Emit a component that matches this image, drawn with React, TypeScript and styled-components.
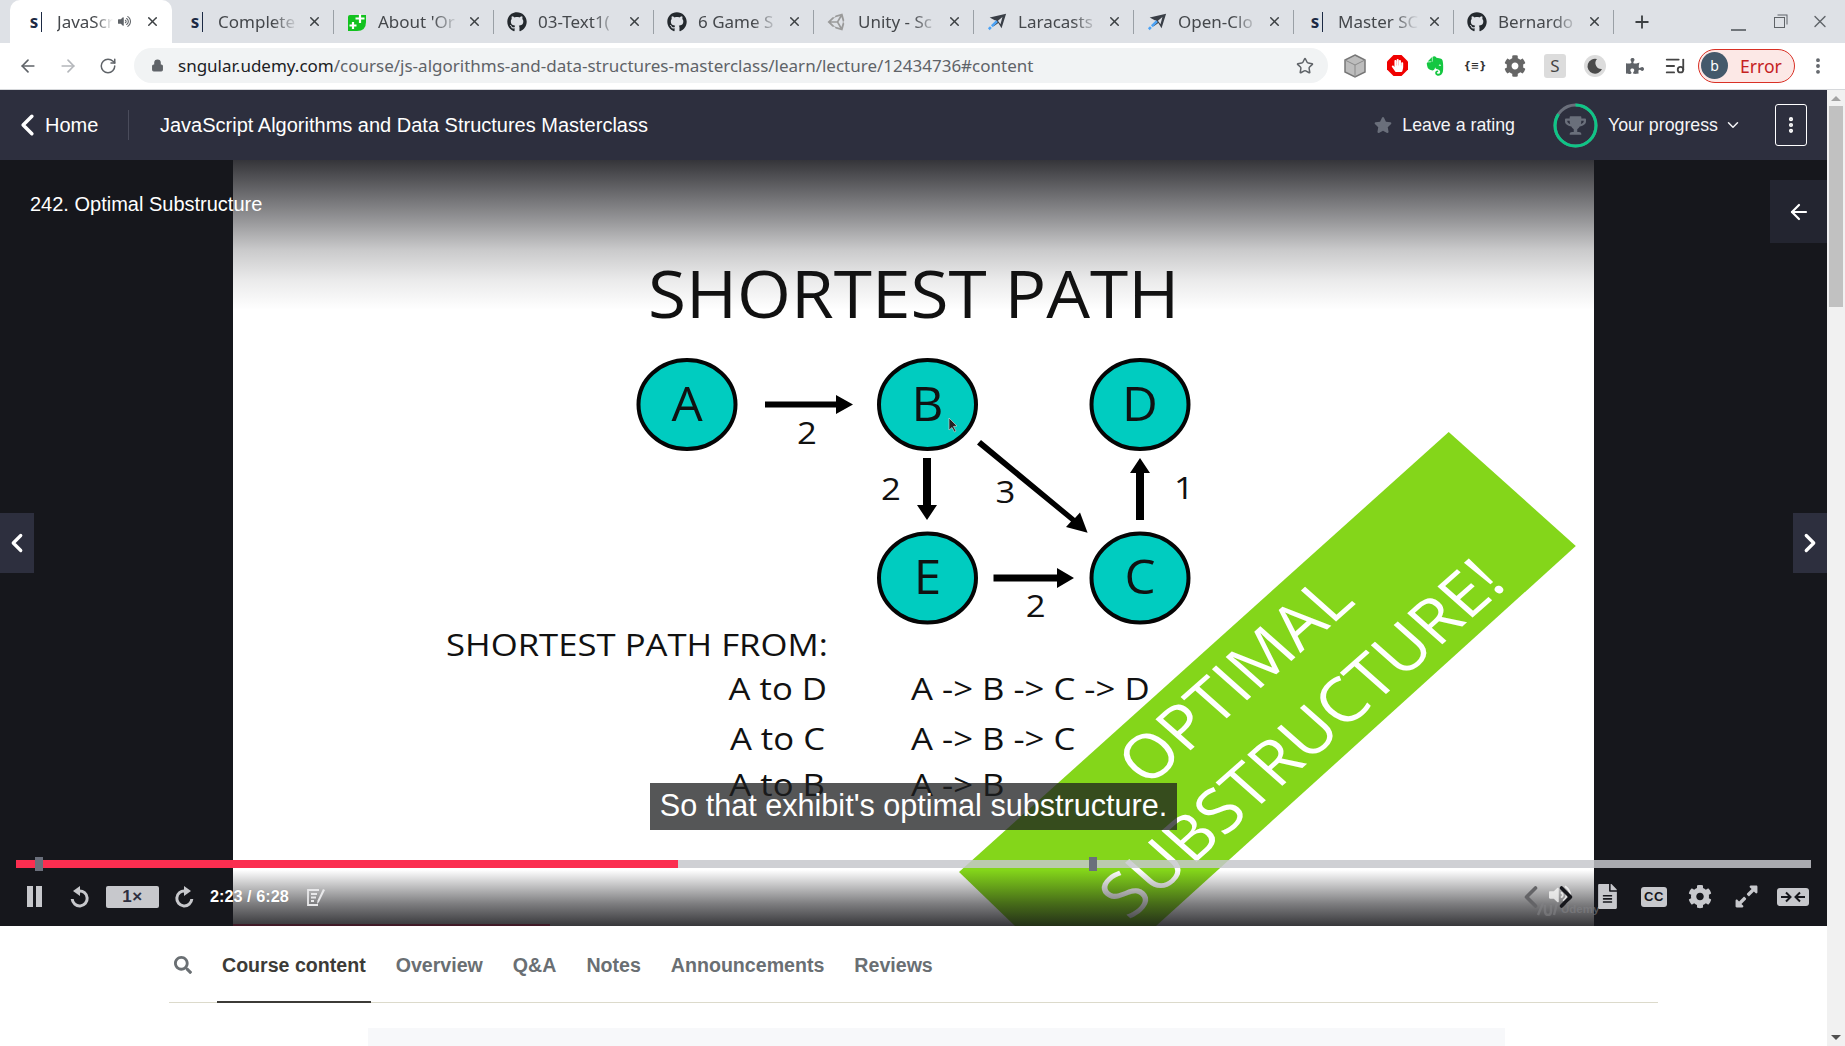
import React from "react";
import styled, { createGlobalStyle } from "styled-components";
import { FaGithub, FaUnity, FaEvernote, FaPuzzlePiece, FaTrophy, FaStar, FaCog, FaExpandAlt, FaFileAlt, FaVolumeUp, FaHandPaper, FaSearch } from "react-icons/fa";
import { ListMusic, X, Plus, Lock, Star, ArrowLeft, ArrowRight, RotateCw, EllipsisVertical, ChevronDown, ChevronLeft, ChevronRight } from "lucide-react";

const Global = createGlobalStyle`
  html, body { margin: 0; padding: 0; width: 1845px; height: 1046px; overflow: hidden; background: #fff; }
  * { box-sizing: border-box; }
`;
const Page = styled.div`width: 1845px; height: 1046px; overflow: hidden; display: flex; flex-direction: column; font-family: "Liberation Sans", Arial, sans-serif;`;

/* browser chrome */
const TabStrip = styled.div`height: 43px; flex: none; background: #dee1e6; display: flex; align-items: stretch; padding-left: 10px; font-family: "Noto Sans", sans-serif; color: #3c4043;`;
const Tab = styled.div<{ $active?: boolean; $sep?: boolean }>`
  position: relative; display: flex; align-items: center; height: 43px;
  width: ${p => (p.$active ? "162px" : "160px")};
  margin-right: ${p => (p.$active ? "2px" : "0")};
  padding: 0 12px 0 ${p => (p.$active ? "16px" : "13px")};
  background: ${p => (p.$active ? "#fff" : "transparent")};
  border-radius: ${p => (p.$active ? "10px 10px 0 0" : "0")};
  &::after { content: ""; display: ${p => (p.$sep ? "block" : "none")}; position: absolute; right: 0; top: 10px; height: 24px; width: 1px; background: #9aa0a6; }
`;
const Favicon = styled.span`width: 20px; height: 20px; flex: none; display: flex; align-items: center; justify-content: center; margin-right: 11px;`;
const SFav = styled.span`font: 700 17px/20px "Noto Sans", sans-serif; color: #1c2a44; border-right: 1.5px solid #1c2a44; padding-right: 3px; height: 20px; display: flex; align-items: center;`;
const TabTitle = styled.span`flex: 1; min-width: 0; font-size: 17px; white-space: nowrap; overflow: hidden; color: #45484c; -webkit-mask-image: linear-gradient(90deg, #000 62%, transparent 92%); mask-image: linear-gradient(90deg, #000 62%, transparent 92%);`;
const Sound = styled.span`width: 14px; height: 14px; flex: none; margin-right: 12px; color: #5f6368; display: flex; align-items: center;`;
const TabClose = styled.span`width: 16px; height: 16px; flex: none; color: #3c4043; display: flex; align-items: center; justify-content: center;`;
const NewTab = styled.span`width: 56px; display: flex; align-items: center; justify-content: center; color: #3c4043;`;
const WindowBtns = styled.div`margin-left: auto; display: flex; align-items: center; gap: 21px; padding-right: 15px; color: #5f6368;`;
const WinBtn = styled.span`width: 20px; height: 20px; display: flex; align-items: center; justify-content: center;`;
const MinGlyph = styled.span`display: block; width: 15px; height: 2px; background: #70757a; margin-top: 16px;`;
const MaxGlyph = styled.span`display: block; width: 11px; height: 11px; border: 1.5px solid #5f6368; margin: 2px 0 0 0; box-shadow: 2px -2px 0 -0.5px #dee1e6, 3px -3px 0 -0.5px #5f6368;`;

const Toolbar = styled.div`height: 47px; flex: none; background: #fff; border-bottom: 1px solid #d6d8db; display: flex; align-items: center; padding: 0 0 1px 18px; font-family: "Noto Sans", sans-serif;`;
const NavBtn = styled.span<{ $dim?: boolean }>`width: 20px; height: 20px; margin-right: 20px; color: ${p => (p.$dim ? "#b4b7bb" : "#5f6368")}; display: flex; align-items: center; justify-content: center;`;
const Omnibox = styled.div`width: 1194px; height: 35px; margin-left: -4px; border-radius: 18px; background: #f1f3f4; display: flex; align-items: center; padding-left: 17px; color: #5f6368;`;
const UrlText = styled.span`margin-left: 14px; font-size: 17px; color: #5f6368; white-space: nowrap;`;
const UrlHost = styled.span`color: #202124;`;
const OmniStar = styled.span`margin-left: auto; margin-right: 14px; display: flex; color: #5f6368;`;
const ExtRow = styled.div`display: flex; align-items: center; margin-left: 7px;`;
const Ext = styled.span`width: 40px; height: 26px; display: flex; align-items: center; justify-content: center; color: #5f6368;`;
const ExtBraces = styled.span`font: 700 10px/1 "DejaVu Sans", sans-serif; color: #333;`;
const ExtTile = styled.span`width: 22px; height: 24px; background: #dcdcdc; border-radius: 3px; font: 400 17px/24px "Noto Sans", sans-serif; color: #444; text-align: center;`;
const Profile = styled.div`width: 97px; height: 34px; margin-left: 3px; border: 1.5px solid #d93025; background: #fce8e6; border-radius: 17px; display: flex; align-items: center; padding-left: 2px; color: #c5221f; font-size: 17.6px;`;
const Avatar = styled.span`width: 27px; height: 27px; border-radius: 50%; background: #44596b; color: #fff; display: flex; align-items: center; justify-content: center; font-size: 14px; margin-right: 12px;`;
const ChromeMenu = styled.span`margin-left: 13px; display: flex; color: #5f6368;`;

/* body */
const Viewport = styled.div`flex: 1; display: flex; min-height: 0;`;
const Main = styled.div`width: 1827px; flex: none; display: flex; flex-direction: column;`;
const ScrollRail = styled.div`width: 18px; flex: none; background: #f1f1f1; display: flex; flex-direction: column; align-items: center;`;
const ScrollUp = styled.span`width: 0; height: 0; margin: 6px 0 5px; border: 5px solid transparent; border-top: 0; border-bottom: 5px solid #a3a3a3;`;
const ScrollThumb = styled.span`width: 14px; height: 201px; background: #c1c1c1;`;
const ScrollDown = styled.span`width: 0; height: 0; margin-top: auto; margin-bottom: 6px; border: 5px solid transparent; border-bottom: 0; border-top: 5px solid #505050;`;

const CourseBar = styled.header`height: 70px; flex: none; background: #2d2f3e; color: #fff; display: flex; align-items: center; padding: 0 20px 0 10px; font-size: 17.8px;`;
const HomeLink = styled.a`display: flex; align-items: center; gap: 0; width: 119px; height: 30px; border-right: 1px solid #4a4c5b; font-size: 20px;`;
const HomeChevron = styled.span`display: flex; width: 35px; flex: none; align-items: center; justify-content: center;`;
const CourseTitle = styled.h1`margin: 0 0 0 31px; font-weight: 400; font-size: 20px;`;
const BarRight = styled.div`margin-left: auto; display: flex; align-items: center;`;
const Rating = styled.span`display: flex; align-items: center; gap: 10px; margin-right: 38px; color: #f5f5f7;`;
const Ring = styled.span`position: relative; width: 45px; height: 45px; display: flex; align-items: center; justify-content: center; margin-right: 10px;`;
const RingSvg = styled.svg`position: absolute; inset: 0;`;
const Progress = styled.span`display: flex; align-items: center; gap: 6px; margin-right: 33px; color: #f5f5f7;`;
const KebabBox = styled.span`width: 32px; height: 42px; border: 1px solid #fff; border-radius: 3px; display: flex; align-items: center; justify-content: center;`;

const Stage = styled.section`position: relative; height: 766px; flex: none; background: #16171c; display: flex; justify-content: center; overflow: hidden;`;
const SlideSvg = styled.svg`display: block; width: 1361px; height: 766px; background: #fff;`;
const SlideText = styled.text<{ $size: number }>`font-family: "Open Sans", sans-serif; font-size: ${p => p.$size}px; fill: #111;`;
const BannerText = styled.text`font-family: "Open Sans", sans-serif; font-size: 61.5px; fill: #fff;`;
const TopShade = styled.div`position: absolute; left: 233px; width: 1361px; top: 0; height: 150px; background: linear-gradient(180deg, rgba(25,25,30,.88), rgba(25,25,30,.46) 40%, rgba(25,25,30,.23) 60%, rgba(25,25,30,.09) 80%, rgba(25,25,30,0));`;
const BottomShade = styled.div`position: absolute; left: 233px; width: 1361px; bottom: 0; height: 56px; background: linear-gradient(180deg, rgba(20,20,24,0), rgba(20,20,24,.55) 60%, rgba(20,20,24,.85));`;
const ShadeEdge = styled.div`position: absolute; left: 0; bottom: 0; width: 317px; height: 2px; background: rgba(70,5,25,.6);`;
const LectureName = styled.div`position: absolute; left: 30px; top: 32px; line-height: 24px; color: #fff; font-size: 20px;`;
const SideTab = styled.button<{ $side: "left" | "right" }>`position: absolute; top: 353px; ${p => p.$side}: 0; width: 34px; height: 60px; padding: 0; border: 0; background: #2d2f3e; color: #fff; display: flex; align-items: center; justify-content: center;`;
const SidebarToggle = styled.button`position: absolute; right: 0; top: 20px; width: 57px; height: 63px; padding: 0; border: 0; background: #232530; color: #fff; display: flex; align-items: center; justify-content: center;`;
const CaptionWrap = styled.div`position: absolute; left: 0; right: 0; bottom: 96px; display: flex; justify-content: center;`;
const Caption = styled.div`height: 47px; line-height: 44px; padding: 0 10px; background: rgba(28,29,31,.75); color: #fff; font-size: 30.6px; white-space: nowrap;`;

const Player = styled.div`position: absolute; left: 0; right: 0; bottom: 0; height: 69px; display: flex; flex-direction: column;`;
const Track = styled.div`position: relative; height: 8px; margin: 3px 16px 0; background: rgba(198,199,204,.84);`;
const Played = styled.div`height: 100%; background: #fb2e50;`;
const Handle = styled.span`position: absolute; top: -3px; width: 8px; height: 14px; background: #6a6f7b;`;
const ControlRow = styled.div`flex: 1; display: flex; align-items: center; padding: 0 18px 0 27px; color: #c7c8cc; margin-top: -1px;`;
const ControlIcon = styled.span<{ $w?: number }>`display: flex; align-items: center; justify-content: center; width: ${p => p.$w ?? 20}px; flex: none;`;
const SpeedPill = styled.span`width: 53px; height: 22px; margin: 0 15px 0 16px; background: #c7c8cc; border-radius: 2px; color: #2d2f3e; font-weight: 700; font-size: 17px; line-height: 22px; text-align: center; letter-spacing: .5px;`;
const TimeCode = styled.span`margin-left: 16px; margin-right: 17px; color: #fff; font-weight: 700; font-size: 16.3px; white-space: nowrap; width: 79px; text-shadow: 0 0 1px rgba(0,0,0,.2);`;
const Push = styled.span`margin-left: auto;`;
const CcBadge = styled.span`width: 26px; height: 20px; border-radius: 3px; background: #c7c8cc; color: #16171c; font-weight: 700; font-size: 13px; line-height: 20px; text-align: center; letter-spacing: .5px; flex: none; margin: 0 21px 0 23px;`;
const SlideNav = styled.div`position: absolute; left: 1519px; bottom: 14px; width: 64px; height: 34px;`;
const NavGlyph = styled.span<{ $right?: boolean; $dark?: boolean }>`position: absolute; top: 1px; ${p => (p.$right ? "right: -1px" : "left: -6px")}; display: flex; color: ${p => (p.$dark ? "#16171c" : "#646467")};`;
const VolumeGlyph = styled.span`position: absolute; left: 30px; top: 6px; display: flex; color: rgba(255,255,255,.72);`;
const WatermarkGroup = styled.span`position: absolute; left: 16px; top: 24px; display: flex; align-items: center; gap: 2px; color: rgba(130,130,134,.6); white-space: nowrap;`;
const WatermarkText = styled.span`font-size: 11.5px; font-weight: 700;`;

const TabsNav = styled.nav`height: 77px; margin: 0 0 0 169px; width: 1489px; border-bottom: 1px solid #dcdacb; display: flex; align-items: flex-end; flex: none; padding-left: 5px;`;
const SearchBtn = styled.span`width: 19px; height: 52px; margin-right: 24px; color: #6a6f73; display: flex; align-items: flex-start; padding-top: 6px;`;
const NavItem = styled.a<{ $active?: boolean }>`height: 51px; padding: 0 5px; margin-right: 20px; margin-bottom: -1px; font-size: 19.6px; font-weight: 700; line-height: 26px; color: ${p => (p.$active ? "#3c3b37" : "#6a6f73")}; border-bottom: ${p => (p.$active ? "2px solid #3c3b37" : "2px solid transparent")};`;
const ContentPanel = styled.div`margin: 25px 0 0 368px; width: 1137px; flex: 1; background: #f7f8fa;`;

const S = () => <SFav>s</SFav>;
const Plane = () => (
  <svg width="22" height="20" viewBox="0 0 22 20">
    <path d="M21 1 L3 5 L8.500 8 L10 8 L7 15 L12.500 11 L16 17Z M17 4.500 L14.800 12.500 L12 8.500Z" fill="#3a3f47" fillRule="evenodd" />
    <path d="M11 9 L2 18" stroke="#4da3f5" strokeWidth="2.800" strokeDasharray="8 1.500" />
  </svg>
);
const Plus2 = () => (
  <svg width="20" height="20" viewBox="0 0 20 20">
    <path d="M3 3 H19 V10 Q19 19 10 19 H1 V5 Q1 3 3 3Z" fill="#12c21f" />
    <path d="M13 2 v9 M8.500 6.500 h9 M6 10 v7 M2.500 13.500 h7" stroke="#fff" strokeWidth="2.200" />
  </svg>
);
const Git = () => <FaGithub size={20} color="#24292e" />;
const tabs: { t: string; i: React.ReactNode }[] = [
  { t: "Complete", i: <S /> },
  { t: "About 'Or", i: <Plus2 /> },
  { t: "03-Text1(", i: <Git /> },
  { t: "6 Game S", i: <Git /> },
  { t: "Unity - Sc", i: <FaUnity size={20} color="#9a9a9a" /> },
  { t: "Laracasts", i: <Plane /> },
  { t: "Open-Clo", i: <Plane /> },
  { t: "Master SC", i: <S /> },
  { t: "Bernardo", i: <Git /> },
];

const Rewind = ({ flip }: { flip?: boolean }) => (
  <svg width="20" height="22" viewBox="0 0 20 22" style={flip ? { transform: "scaleX(-1)" } : undefined} fill="none">
    <path d="M9 5 A7.500 7.500 0 1 1 2.200 13" stroke="currentColor" strokeWidth="3" />
    <path d="M10 0 L3 5 L10 10Z" fill="currentColor" />
  </svg>
);
const PauseGlyph = () => (
  <svg width="15" height="21" viewBox="0 0 15 21"><path d="M0 0 H6 V21 H0Z M9 0 H15 V21 H9Z" fill="currentColor" /></svg>
);
const NotePen = () => (
  <svg width="20" height="20" viewBox="0 0 20 20" fill="none" stroke="#e8e8ea" strokeWidth="1.800">
    <path d="M13 3 H2 V18 H12" />
    <path d="M5 7 h6 M5 10.500 h5 M5 14 h3" />
    <path d="M19 3 L13 15 L11 17 L11.500 13.500 L17 2Z" fill="#e8e8ea" stroke="none" />
  </svg>
);
const Theatre = () => (
  <svg width="32" height="18" viewBox="0 0 32 18">
    <rect width="32" height="18" rx="3" fill="#c7c8cc" />
    <path d="M4 9 h9 M9 4.500 L13.500 9 L9 13.500 M28 9 h-9 M23 4.500 L18.500 9 L23 13.500" stroke="#16171c" strokeWidth="2" fill="none" />
  </svg>
);
const UdemyMark = () => (
  <svg width="24" height="14" viewBox="0 0 24 14" fill="none" stroke="currentColor" strokeWidth="2.400"><path d="M3 13 L8 1 M10 3 V9 Q10 13 13 13 Q16 13 16 9 V3 M19 13 L22 1" /></svg>
);

const Node = ({ x, y, l }: { x: number; y: number; l: string }) => (
  <g>
    <ellipse cx={x} cy={y} rx={48.500} ry={44.500} fill="#00ccc0" stroke="#050505" strokeWidth="4" />
    <SlideText $size={47} textAnchor="middle" transform={`translate(${x} ${y + 16}) scale(1.05 1)`}>{l}</SlideText>
  </g>
);
const Txt = ({ x, y, s, a, c, k = 1.12 }: { x: number; y: number; s: number; a?: "middle" | "end"; c: string; k?: number }) => (
  <SlideText $size={s} textAnchor={a} transform={`translate(${x} ${y}) scale(${k} 1)`}>{c}</SlideText>
);

const Slide = () => (
  <SlideSvg viewBox="233 160 1361 766">
    <polygon points="1448.700,432 1575.800,546 1156,926 1015,926 959,872" fill="#84d61a" />
    <Txt x={648} y={318} s={66} k={1.05} c="SHORTEST PATH" />
    <Node x={687} y={404.500} l="A" />
    <Node x={927.500} y={404.500} l="B" />
    <Node x={1140} y={404.500} l="D" />
    <Node x={927.500} y={578} l="E" />
    <Node x={1140} y={578} l="C" />
    <path d="M765 401.500 H836 V395 L853 404.500 L836 414 V407.500 H765Z" fill="#000" />
    <path d="M923 458 H931 V505 H937 L927 520 L917 505 H923Z" fill="#000" />
    <path d="M1136 520 V473 H1130 L1140 458 L1150 473 H1144 V520Z" fill="#000" />
    <path d="M993.500 574.500 H1057 V568 L1074 578 L1057 588 V581.500 H993.500Z" fill="#000" />
    <path d="M981 440 L1075 518 L1080 512.500 L1087.600 532.700 L1066 527 L1071 521.500 L977 444.500Z" fill="#000" />
    <path d="M949 418 V430 L952 427.500 L954.500 432 L956 431 L953.500 426.500 L957 426Z" fill="#222" stroke="#ddd" strokeWidth=".6" />
    <Txt x={807} y={444} s={31} a="middle" c="2" />
    <Txt x={891} y={500} s={31} a="middle" c="2" />
    <Txt x={1005.500} y={503} s={31} a="middle" c="3" />
    <Txt x={1184} y={499} s={31} a="middle" c="1" />
    <Txt x={1035.600} y={617} s={31} a="middle" c="2" />
    <Txt x={446} y={656} s={31} c="SHORTEST PATH FROM:" />
    <Txt x={827} y={700} s={31} a="end" c="A to D" />
    <Txt x={825} y={749.500} s={31} a="end" c="A to C" />
    <Txt x={825} y={796} s={31} a="end" c="A to B" />
    <Txt x={911} y={700} s={31} c="A -> B -> C -> D" />
    <Txt x={911} y={749.500} s={31} c="A -> B -> C" />
    <Txt x={911} y={796} s={31} c="A -> B" />
    <BannerText textAnchor="end" transform="translate(1357 603) scale(1.13 1) rotate(-45)">OPTIMAL</BannerText>
    <BannerText textAnchor="end" transform="translate(1508 586) scale(1.13 1) rotate(-45)">SUBSTRUCTURE!</BannerText>
  </SlideSvg>
);

export default function App() {
  return (
    <Page>
      <Global />
      <TabStrip>
        <Tab $active>
          <Favicon><S /></Favicon>
          <TabTitle>JavaScr</TabTitle>
          <Sound><FaVolumeUp size={13} /></Sound>
          <TabClose><X size={15} strokeWidth={2.400} /></TabClose>
        </Tab>
        {tabs.map(t => (
          <Tab key={t.t} $sep>
            <Favicon>{t.i}</Favicon>
            <TabTitle>{t.t}</TabTitle>
            <TabClose><X size={15} strokeWidth={2.400} /></TabClose>
          </Tab>
        ))}
        <NewTab><Plus size={20} strokeWidth={2.200} /></NewTab>
        <WindowBtns>
          <WinBtn><MinGlyph /></WinBtn>
          <WinBtn><MaxGlyph /></WinBtn>
          <WinBtn><X size={21} strokeWidth={1.600} /></WinBtn>
        </WindowBtns>
      </TabStrip>
      <Toolbar>
        <NavBtn><ArrowLeft size={20} /></NavBtn>
        <NavBtn $dim><ArrowRight size={20} /></NavBtn>
        <NavBtn><RotateCw size={18} /></NavBtn>
        <Omnibox>
          <Lock size={13} fill="#5f6368" />
          <UrlText><UrlHost>sngular.udemy.com</UrlHost>/course/js-algorithms-and-data-structures-masterclass/learn/lecture/12434736#content</UrlText>
          <OmniStar><Star size={18} /></OmniStar>
        </Omnibox>
        <ExtRow>
          <Ext>
            <svg width="22" height="24" viewBox="0 0 22 24"><path d="M11 1 L21 6 V18 L11 23 L1 18 V6Z" fill="#bdbdbd" stroke="#777" strokeWidth="1.500" /><path d="M1 6 L11 11 L21 6 M11 11 V23" stroke="#8a8a8a" fill="none" /></svg>
          </Ext>
          <Ext>
            <svg width="21" height="21" viewBox="0 0 21 21"><path d="M6.500 0 H14.500 L21 6.500 V14.500 L14.500 21 H6.500 L0 14.500 V6.500Z" fill="#f00000" /></svg>
            <FaHandPaper size={13} color="#fff" style={{ marginLeft: -17 }} />
          </Ext>
          <Ext><FaEvernote size={22} color="#14c741" /></Ext>
          <Ext><ExtBraces>{"{≡}"}</ExtBraces></Ext>
          <Ext><FaCog size={22} color="#666" /></Ext>
          <Ext><ExtTile>S</ExtTile></Ext>
          <Ext>
            <svg width="22" height="22" viewBox="0 0 22 22"><circle cx="11" cy="11" r="11" fill="#dcdcdc" /><path d="M13 4 A7.500 7.500 0 1 0 18 14 A6 6 0 0 1 13 4Z" fill="#4a4a4a" /></svg>
          </Ext>
          <Ext><FaPuzzlePiece size={18} /></Ext>
          <Ext><ListMusic size={22} color="#444" /></Ext>
        </ExtRow>
        <Profile><Avatar>b</Avatar>Error</Profile>
        <ChromeMenu><EllipsisVertical size={20} strokeWidth={2.600} /></ChromeMenu>
      </Toolbar>
      <Viewport>
        <Main>
          <CourseBar>
            <HomeLink><HomeChevron><ChevronLeft size={44} strokeWidth={2.400} /></HomeChevron>Home</HomeLink>
            <CourseTitle>JavaScript Algorithms and Data Structures Masterclass</CourseTitle>
            <BarRight>
              <Rating><FaStar size={18} color="#6a6f7b" />Leave a rating</Rating>
              <Ring>
                <RingSvg width="45" height="45" viewBox="0 0 45 45">
                  <circle cx="22.500" cy="22.500" r="20.500" fill="none" stroke="#6a6f7b" strokeWidth="3" />
                  <circle cx="22.500" cy="22.500" r="20.500" fill="none" stroke="#0fc586" strokeWidth="3" strokeDasharray="108 129" transform="rotate(-90 22.500 22.500)" />
                </RingSvg>
                <FaTrophy size={21} color="#6a6f7b" />
              </Ring>
              <Progress>Your progress<ChevronDown size={18} /></Progress>
              <KebabBox><EllipsisVertical size={20} strokeWidth={3} /></KebabBox>
            </BarRight>
          </CourseBar>
          <Stage>
            <Slide />
            <TopShade />
            <BottomShade><ShadeEdge /></BottomShade>
            <LectureName>242. Optimal Substructure</LectureName>
            <SidebarToggle><ArrowLeft size={24} strokeWidth={2.200} /></SidebarToggle>
            <SideTab $side="left"><ChevronLeft size={30} strokeWidth={2.600} /></SideTab>
            <SideTab $side="right"><ChevronRight size={30} strokeWidth={2.600} /></SideTab>
            <CaptionWrap><Caption>So that exhibit's optimal substructure.</Caption></CaptionWrap>
            <SlideNav>
              <NavGlyph><ChevronLeft size={36} strokeWidth={2.400} /></NavGlyph>
              <WatermarkGroup><UdemyMark /><WatermarkText>Udemy</WatermarkText></WatermarkGroup>
              <VolumeGlyph><FaVolumeUp size={22} /></VolumeGlyph>
              <NavGlyph $right $dark><ChevronRight size={36} strokeWidth={2.400} /></NavGlyph>
            </SlideNav>
            <Player>
              <Track>
                <Played style={{ width: `${((678 - 16) / 1795) * 100}%` }} />
                <Handle style={{ left: 19 }} />
                <Handle style={{ left: 1073 }} />
              </Track>
              <ControlRow>
                <ControlIcon $w={15}><PauseGlyph /></ControlIcon>
                <ControlIcon style={{ marginLeft: 28 }}><Rewind /></ControlIcon>
                <SpeedPill>1×</SpeedPill>
                <ControlIcon><Rewind flip /></ControlIcon>
                <TimeCode>2:23 / 6:28</TimeCode>
                <ControlIcon><NotePen /></ControlIcon>
                <Push />
                <ControlIcon $w={21}><FaFileAlt size={25} /></ControlIcon>
                <CcBadge>CC</CcBadge>
                <ControlIcon $w={24}><FaCog size={25} /></ControlIcon>
                <ControlIcon $w={25} style={{ marginLeft: 22, marginRight: 18 }}><FaExpandAlt size={25} /></ControlIcon>
                <ControlIcon $w={32}><Theatre /></ControlIcon>
              </ControlRow>
            </Player>
          </Stage>
          <TabsNav>
            <SearchBtn><FaSearch size={18} /></SearchBtn>
            <NavItem $active>Course content</NavItem>
            <NavItem>Overview</NavItem>
            <NavItem>Q&amp;A</NavItem>
            <NavItem>Notes</NavItem>
            <NavItem>Announcements</NavItem>
            <NavItem>Reviews</NavItem>
          </TabsNav>
          <ContentPanel />
        </Main>
        <ScrollRail>
          <ScrollUp />
          <ScrollThumb />
          <ScrollDown />
        </ScrollRail>
      </Viewport>
    </Page>
  );
}
